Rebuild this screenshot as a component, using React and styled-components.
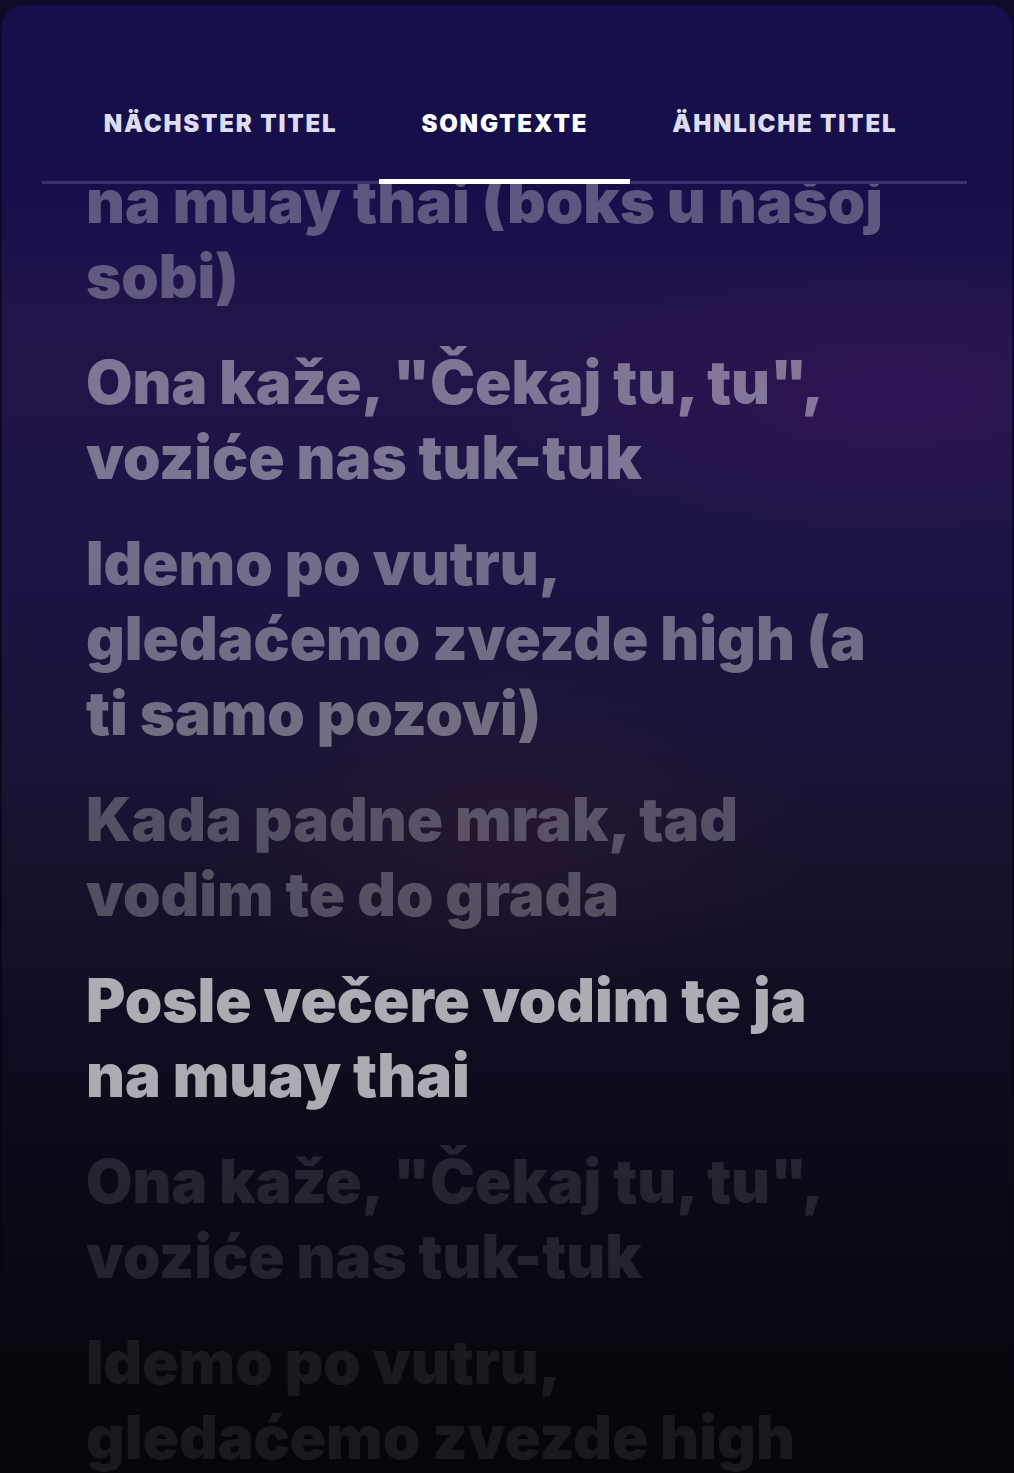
import React from 'react';
import styled, { createGlobalStyle } from 'styled-components';

const GlobalStyle = createGlobalStyle`
  html, body {
    margin: 0;
    padding: 0;
    height: 100%;
    background: #0b0a20;
  }

  body {
    font-family: Inter, "Noto Sans", "Liberation Sans", sans-serif;
    -webkit-font-smoothing: antialiased;
  }
`;

const Screen = styled.div`
  height: 100vh;
  box-sizing: border-box;
  padding: 5px 2px 0;
  display: flex;
  background: linear-gradient(180deg, #0d0b28 0%, #07060c 100%);
  overflow: hidden;
`;

const Panel = styled.section`
  flex: 1;
  display: flex;
  flex-direction: column;
  min-height: 0;
  border-radius: 22px 22px 0 0;
  overflow: hidden;
  background:
    radial-gradient(ellipse 55% 14% at 88% 27%, rgba(66, 24, 100, 0.4), transparent 70%),
    radial-gradient(ellipse 45% 16% at 50% 56%, rgba(58, 30, 48, 0.35), transparent 70%),
    linear-gradient(
      180deg,
      #150f4c 0%,
      #160f4a 12%,
      #221448 22%,
      #1f1446 32%,
      #1b1442 40%,
      #1a1438 50%,
      #17122b 60%,
      #100c1f 70%,
      #0b0914 82%,
      #060509 100%
    );
`;

const Header = styled.header`
  padding: 106px 0 0 40px;
  display: flex;
`;

const TabBar = styled.nav`
  width: 925px;
  box-sizing: border-box;
  padding-right: 8px;
  display: flex;
  justify-content: center;
  box-shadow: inset 0 -3px 0 #37336c;
`;

const Tab = styled.button`
  appearance: none;
  background: none;
  border: 0;
  border-bottom: 5px solid ${(p) => (p.$active ? '#ffffff' : 'transparent')};
  margin: 0;
  padding: 0 42px 42px;
  font-family: Inter, "Noto Sans", sans-serif;
  font-weight: 900;
  font-size: 24px;
  line-height: 26px;
  letter-spacing: 1.8px;
  text-transform: uppercase;
  white-space: nowrap;
  color: ${(p) => (p.$active ? '#ffffff' : '#dedcf0')};
  cursor: pointer;
`;

const Viewport = styled.div`
  flex: 1;
  min-height: 0;
  overflow: hidden;
`;

/* the list is scrolled so the previous line sits half under the tabs */
const LyricList = styled.div`
  margin-top: -20px;
  padding: 0 123px 0 84px;
`;

const Line = styled.p`
  margin: 0 0 31px;
  font-family: Inter, "Noto Sans", sans-serif;
  font-weight: 900;
  font-size: 60px;
  line-height: 75px;
  letter-spacing: 0;
  color: rgba(255, 255, 255, ${(p) => p.$alpha});
`;

const tabs = ['Nächster Titel', 'Songtexte', 'Ähnliche Titel'];

const lyrics = [
  { text: 'na muay thai (boks u našoj sobi)', alpha: 0.3 },
  { text: 'Ona kaže, "Čekaj tu, tu", voziće nas tuk-tuk', alpha: 0.42 },
  { text: 'Idemo po vutru, gledaćemo zvezde high (a ti samo pozovi)', alpha: 0.38 },
  { text: 'Kada padne mrak, tad vodim te do grada', alpha: 0.26 },
  { text: 'Posle večere vodim te ja na muay thai', alpha: 0.66 },
  { text: 'Ona kaže, "Čekaj tu, tu", voziće nas tuk-tuk', alpha: 0.11 },
  { text: 'Idemo po vutru, gledaćemo zvezde high', alpha: 0.08 },
];

const App = () => {
  return (
    <>
      <GlobalStyle />
      <Screen>
        <Panel>
          <Header>
            <TabBar>
              {tabs.map((t) => (
                <Tab key={t} $active={t === 'Songtexte'}>
                  {t}
                </Tab>
              ))}
            </TabBar>
          </Header>
          <Viewport>
            <LyricList>
              {lyrics.map((l, i) => (
                <Line key={i} $alpha={l.alpha}>
                  {l.text}
                </Line>
              ))}
            </LyricList>
          </Viewport>
        </Panel>
      </Screen>
    </>
  );
};

export default App;
